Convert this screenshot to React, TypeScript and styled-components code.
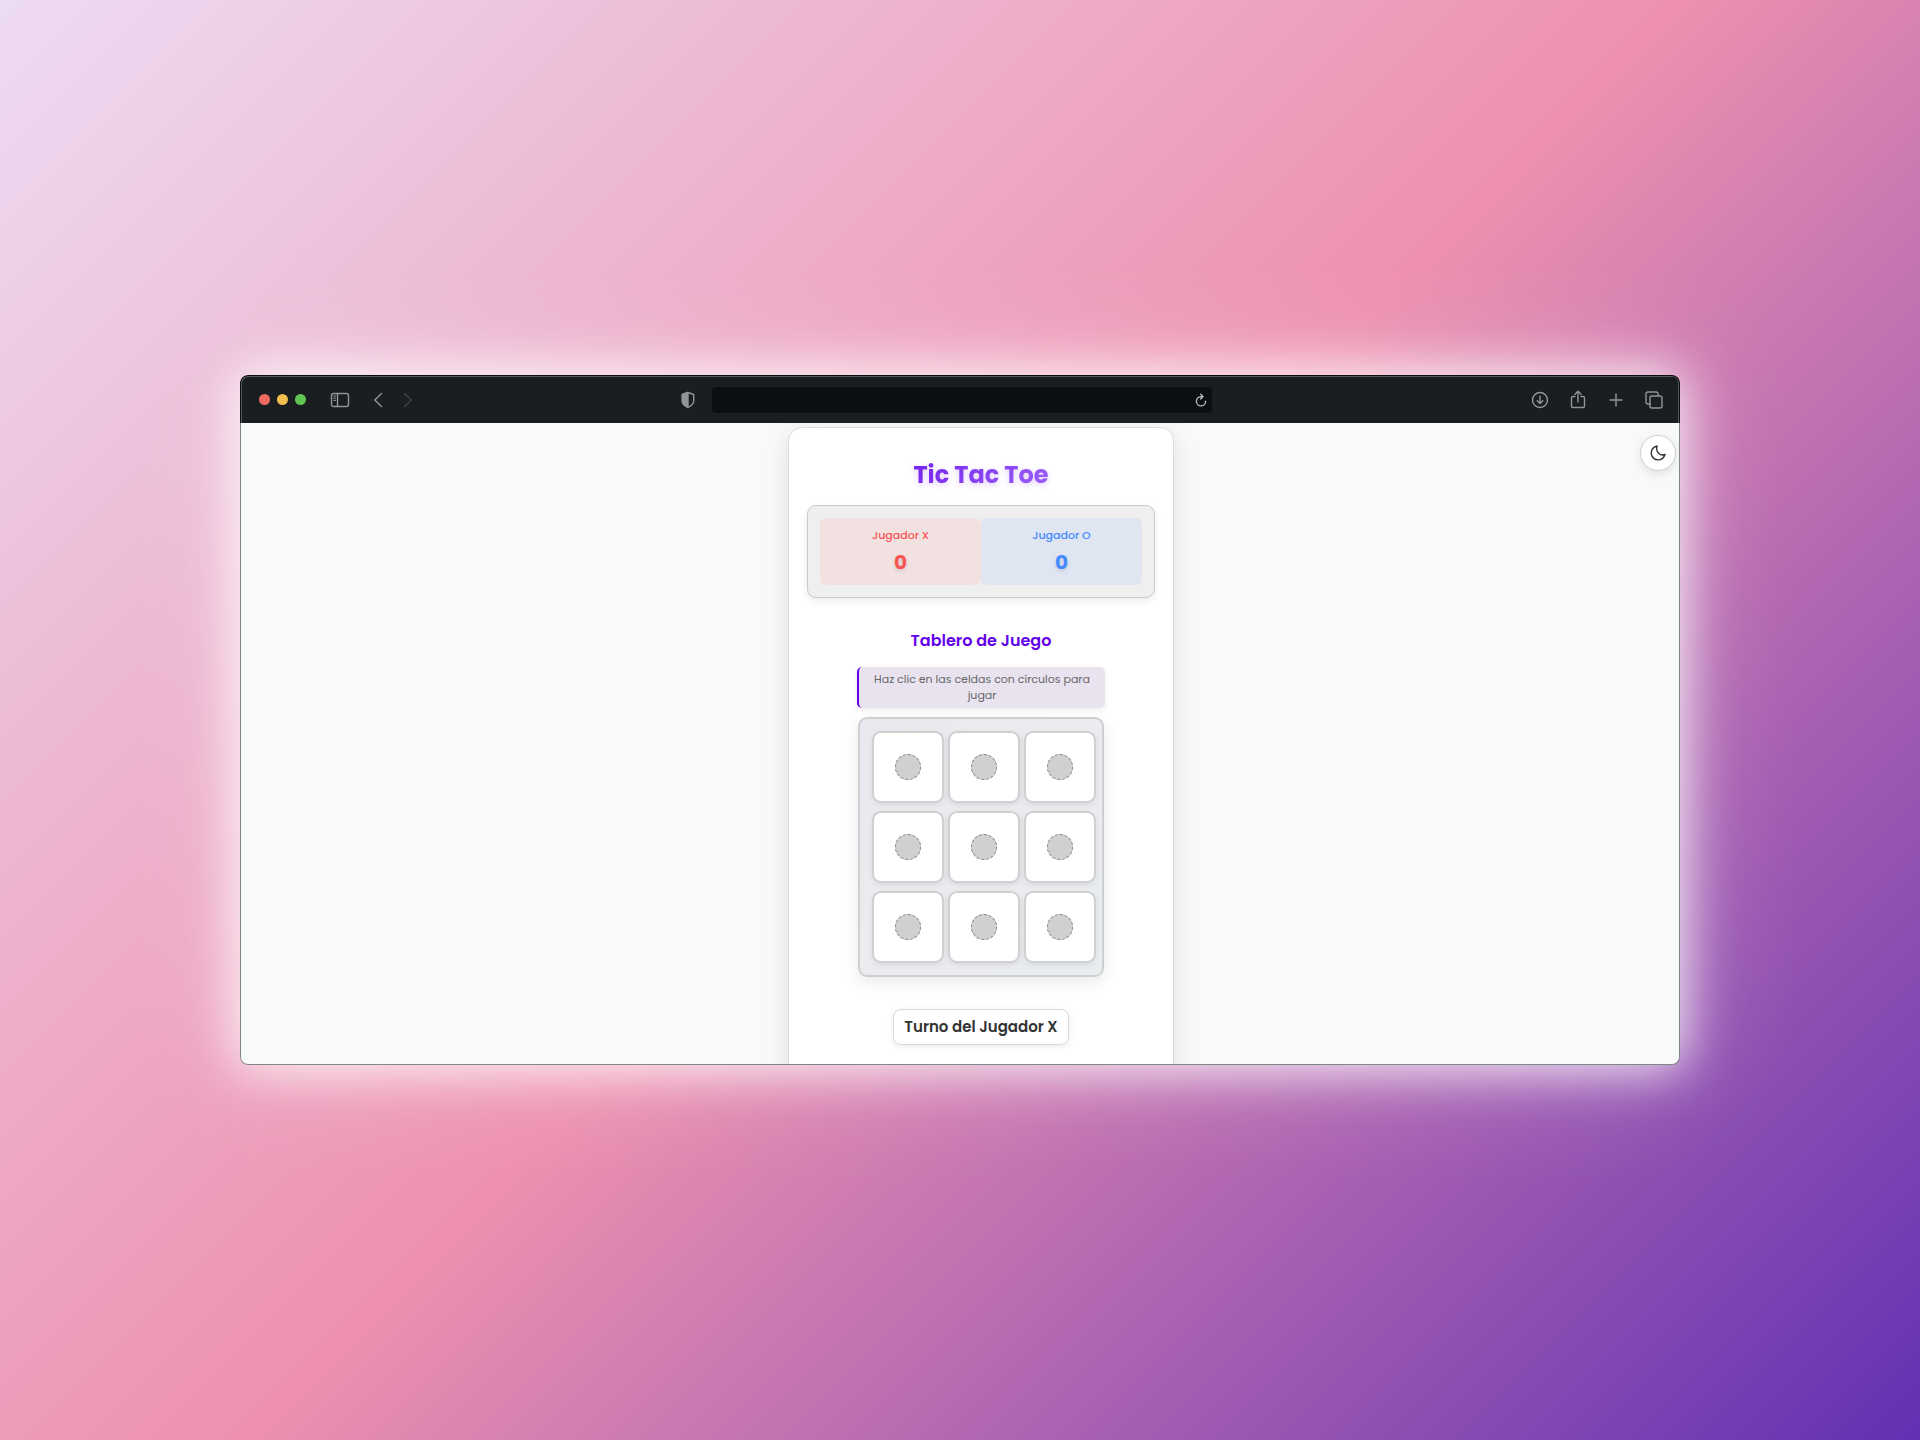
import React, { useState } from "react";
import styled, { createGlobalStyle } from "styled-components";

const GlobalStyle = createGlobalStyle`
  *, *::before, *::after { box-sizing: border-box; }
  body { margin: 0; font-family: Poppins, Lato, "Open Sans", sans-serif; }
  button { font-family: inherit; }
`;

const Backdrop = styled.div`
  min-height: 100vh;
  display: flex;
  align-items: center;
  justify-content: center;
  background: linear-gradient(135deg, #eddcf3 0%, #ee91b0 50%, #6130b3 100%);
`;

const BrowserWindow = styled.div`
  width: 75%;
  height: calc(48vh - 2px);
  display: flex;
  flex-direction: column;
  overflow: hidden;
  border-radius: 8px;
  box-shadow: 0 0 50px 4px rgba(255, 255, 255, 0.85), 0 0 120px rgba(255, 255, 255, 0.3);
`;

const Toolbar = styled.header`
  flex: none;
  height: 48px;
  padding: 0 15px 0 18px;
  display: grid;
  grid-template-columns: 14fr 532px 15fr;
  align-items: center;
  border: 1px solid #0a0d0e;
  border-bottom: 0;
  border-radius: 8px 8px 0 0;
  background: #1a1e20;
  box-shadow: inset 1px 1px 0 #555b5c, inset -1px 0 0 #555b5c;
`;

const ToolGroup = styled.div<{ $end?: boolean; $gap: number }>`
  display: flex;
  align-items: center;
  justify-content: ${(p) => (p.$end ? "flex-end" : "flex-start")};
  gap: ${(p) => p.$gap}px;
`;

const ToolButton = styled.button<{ $color?: string }>`
  display: flex;
  padding: 0;
  border: 0;
  background: none;
  color: ${(p) => p.$color || "#929596"};
`;

const Lights = styled.div`
  display: flex;
  gap: 7px;
  margin-right: 6px;
`;

const Light = styled.span<{ $color: string }>`
  width: 11px;
  height: 11px;
  border-radius: 50%;
  background: ${(p) => p.$color};
`;

const AddressArea = styled.div`
  display: flex;
  align-items: center;
  gap: 16px;
`;

const AddressBar = styled.div`
  flex: 1;
  height: 26px;
  display: flex;
  align-items: center;
  padding-right: 4px;
  border-radius: 4px;
  background: #0b0f11;
`;

const AddressInput = styled.input`
  flex: 1;
  border: 0;
  outline: 0;
  background: none;
  color: #ddd;
`;

const Page = styled.main`
  position: relative;
  flex: 1;
  min-height: 0;
  overflow: hidden;
  padding: 4px 0 0 42px;
  border: 1px solid #7f8886;
  border-top: 0;
  border-radius: 0 0 8px 8px;
  background: #f8f9fb;
`;

const ThemeButton = styled.button`
  position: absolute;
  top: 12px;
  right: 3px;
  width: 36px;
  height: 36px;
  display: flex;
  align-items: center;
  justify-content: center;
  padding: 0;
  border: 1px solid #cfcfcf;
  border-radius: 50%;
  background: #fff;
  color: #333;
  box-shadow: 0 3px 10px rgba(0, 0, 0, 0.1);
`;

const Card = styled.section`
  width: 386px;
  min-height: 700px;
  margin: 0 auto;
  padding: 30px 18px;
  display: flex;
  flex-direction: column;
  align-items: center;
  border: 1px solid #dcdcdd;
  border-radius: 14px;
  background: #fff;
  box-shadow: 0 6px 24px rgba(0, 0, 0, 0.1);
`;

const Title = styled.h1`
  margin: 0 0 13px;
  font-size: 24px;
  line-height: 34px;
  font-weight: 700;
  color: transparent;
  background: linear-gradient(135deg, #7420ee, #9c62fa);
  background-clip: text;
  filter: drop-shadow(0 2px 3px rgba(98, 0, 234, 0.2));
`;

const Scores = styled.div`
  align-self: stretch;
  display: flex;
  padding: 12px;
  border: 1px solid #cacaca;
  border-radius: 9px;
  background: #efefef;
  box-shadow: 0 3px 8px rgba(0, 0, 0, 0.08);
`;

const Score = styled.div<{ $ink: string; $fill: string }>`
  flex: 1;
  height: 67px;
  padding-top: 8px;
  text-align: center;
  border-radius: 6px;
  color: ${(p) => p.$ink};
  background: ${(p) => p.$fill};
`;

const ScoreName = styled.div`
  font-size: 11px;
  line-height: 18px;
  font-weight: 500;
`;

const ScoreValue = styled.div`
  margin-top: 3px;
  font-size: 20px;
  line-height: 30px;
  font-weight: 700;
  text-shadow: 0 2px 4px rgba(0, 0, 0, 0.12);
`;

const BoardTitle = styled.h2`
  margin: 30px 0 13px;
  font-size: 16px;
  line-height: 26px;
  font-weight: 600;
  color: #6200ea;
`;

const Hint = styled.p`
  width: 248px;
  margin: 0 0 9px;
  padding: 4px 12px 5px;
  text-align: center;
  font-size: 11px;
  line-height: 16px;
  color: #666;
  border-left: 2px solid #6200ea;
  border-radius: 5px;
  background: #e9e3f0;
  box-shadow: 0 2px 6px rgba(0, 0, 0, 0.07);
`;

const Board = styled.div`
  display: grid;
  grid-template-columns: repeat(3, 72px);
  gap: 8px 4px;
  padding: 12px 6px 12px 12px;
  border: 2px solid #cfcfcf;
  border-radius: 9px;
  background: linear-gradient(135deg, #ebe9ef, #ececf0 60%, #e9eef0);
  box-shadow: 0 5px 16px rgba(0, 0, 0, 0.09);
`;

const Cell = styled.button`
  height: 72px;
  display: flex;
  align-items: center;
  justify-content: center;
  padding: 0;
  border: 2px solid #d0d0d0;
  border-radius: 9px;
  background: #fff;
  font-size: 32px;
  font-weight: 700;
  box-shadow: 0 2px 6px rgba(0, 0, 0, 0.08);
`;

const Dot = styled.span`
  width: 26px;
  height: 26px;
  border: 1px dashed #808080;
  border-radius: 50%;
  background: #d0d0d0;
`;

const Turn = styled.div`
  margin-top: 32px;
  padding: 5px 10px;
  font-size: 15px;
  line-height: 24px;
  font-weight: 600;
  color: #333;
  border: 1px solid #d8d8d8;
  border-radius: 8px;
  box-shadow: 0 2px 7px rgba(0, 0, 0, 0.08);
`;

const Icon = ({ w = 20, h = 20, children }: { w?: number; h?: number; children: React.ReactNode }) => (
  <svg width={w} height={h} viewBox={`0 0 ${w} ${h}`} fill="none" stroke="currentColor" strokeWidth="1.4" strokeLinecap="round" strokeLinejoin="round" aria-hidden="true">
    {children}
  </svg>
);

export default function App() {
  const [cells, setCells] = useState<string[]>(Array(9).fill(""));
  const turn = cells.filter(Boolean).length % 2 ? "O" : "X";
  const play = (i: number) =>
    setCells((old) => old.map((c, n) => (n === i && !c ? turn : c)));

  return (
    <>
      <GlobalStyle />
      <Backdrop>
        <BrowserWindow>
          <Toolbar>
            <ToolGroup $gap={18}>
              <Lights>
                <Light $color="#ed6a5e" />
                <Light $color="#f5bf4f" />
                <Light $color="#61c554" />
              </Lights>
              <ToolButton aria-label="Barra lateral">
                <Icon>
                  <rect x="1.500" y="3.500" width="17" height="13" rx="2" />
                  <path d="M7.500 3.500v13" />
                  <path d="M3.600 6h2M3.600 8.200h2M3.600 10.400h2" strokeWidth="1" />
                </Icon>
              </ToolButton>
              <ToolGroup $gap={10}>
                <ToolButton aria-label="Atrás"><Icon><path d="M13.500 3.500L6.800 10l6.700 6.500" /></Icon></ToolButton>
                <ToolButton aria-label="Adelante" $color="#3f4345"><Icon><path d="M6.500 3.500L13.200 10l-6.700 6.500" /></Icon></ToolButton>
              </ToolGroup>
            </ToolGroup>
            <AddressArea>
              <ToolButton aria-label="Privacidad">
                <Icon w={16} h={18}>
                  <path d="M8 1.500L13.700 3.500V10c0 3-2.500 4.800-5.700 6.500C4.800 14.800 2.300 13 2.300 10V3.500z" />
                  <path d="M8 1.500V16.500C4.800 14.800 2.300 13 2.300 10V3.500z" fill="currentColor" />
                </Icon>
              </ToolButton>
              <AddressBar>
                <AddressInput aria-label="Dirección" />
                <ToolButton aria-label="Recargar" $color="#b4b6b7">
                  <Icon w={14} h={16}><path d="M11.600 9.300A4.600 4.600 0 1 1 7 4.700h1.500M6.700 2.200l2.300 2.400-2.300 2.300" /></Icon>
                </ToolButton>
              </AddressBar>
            </AddressArea>
            <ToolGroup $end $gap={18}>
              <ToolButton aria-label="Descargas"><Icon><circle cx="10" cy="10" r="7.500" /><path d="M10 6.300v7M7.200 10.700l2.800 2.800 2.800-2.800" /></Icon></ToolButton>
              <ToolButton aria-label="Compartir"><Icon><path d="M7 6.500H5A1.500 1.500 0 0 0 3.500 8v8A1.500 1.500 0 0 0 5 17.500h10a1.500 1.500 0 0 0 1.500-1.500V8A1.500 1.500 0 0 0 15 6.500h-2M10 12V1.500M7 4.300l3-3 3 3" /></Icon></ToolButton>
              <ToolButton aria-label="Nueva pestaña"><Icon><path d="M10 4v12M4 10h12" /></Icon></ToolButton>
              <ToolButton aria-label="Pestañas"><Icon><rect x="6" y="6" width="12" height="12" rx="2" /><path d="M6 14H4a2 2 0 0 1-2-2V4a2 2 0 0 1 2-2h8a2 2 0 0 1 2 2v2" /></Icon></ToolButton>
            </ToolGroup>
          </Toolbar>
          <Page>
            <ThemeButton aria-label="Modo oscuro">
              <Icon w={18} h={18}><path d="M8 2A7 7 0 1 0 16 10.500C11 12.500 6.500 8 8 2z" /></Icon>
            </ThemeButton>
            <Card>
              <Title>Tic Tac Toe</Title>
              <Scores>
                <Score $ink="#fa5555" $fill="#f1e1e1">
                  <ScoreName>Jugador X</ScoreName>
                  <ScoreValue>0</ScoreValue>
                </Score>
                <Score $ink="#448aff" $fill="#dfe5f1">
                  <ScoreName>Jugador O</ScoreName>
                  <ScoreValue>0</ScoreValue>
                </Score>
              </Scores>
              <BoardTitle>Tablero de Juego</BoardTitle>
              <Hint>Haz clic en las celdas con círculos para jugar</Hint>
              <Board>
                {cells.map((c, i) => (
                  <Cell key={i} aria-label={`Celda ${i + 1}`} onClick={() => play(i)}>
                    {c || <Dot />}
                  </Cell>
                ))}
              </Board>
              <Turn>Turno del Jugador {turn}</Turn>
            </Card>
          </Page>
        </BrowserWindow>
      </Backdrop>
    </>
  );
}
